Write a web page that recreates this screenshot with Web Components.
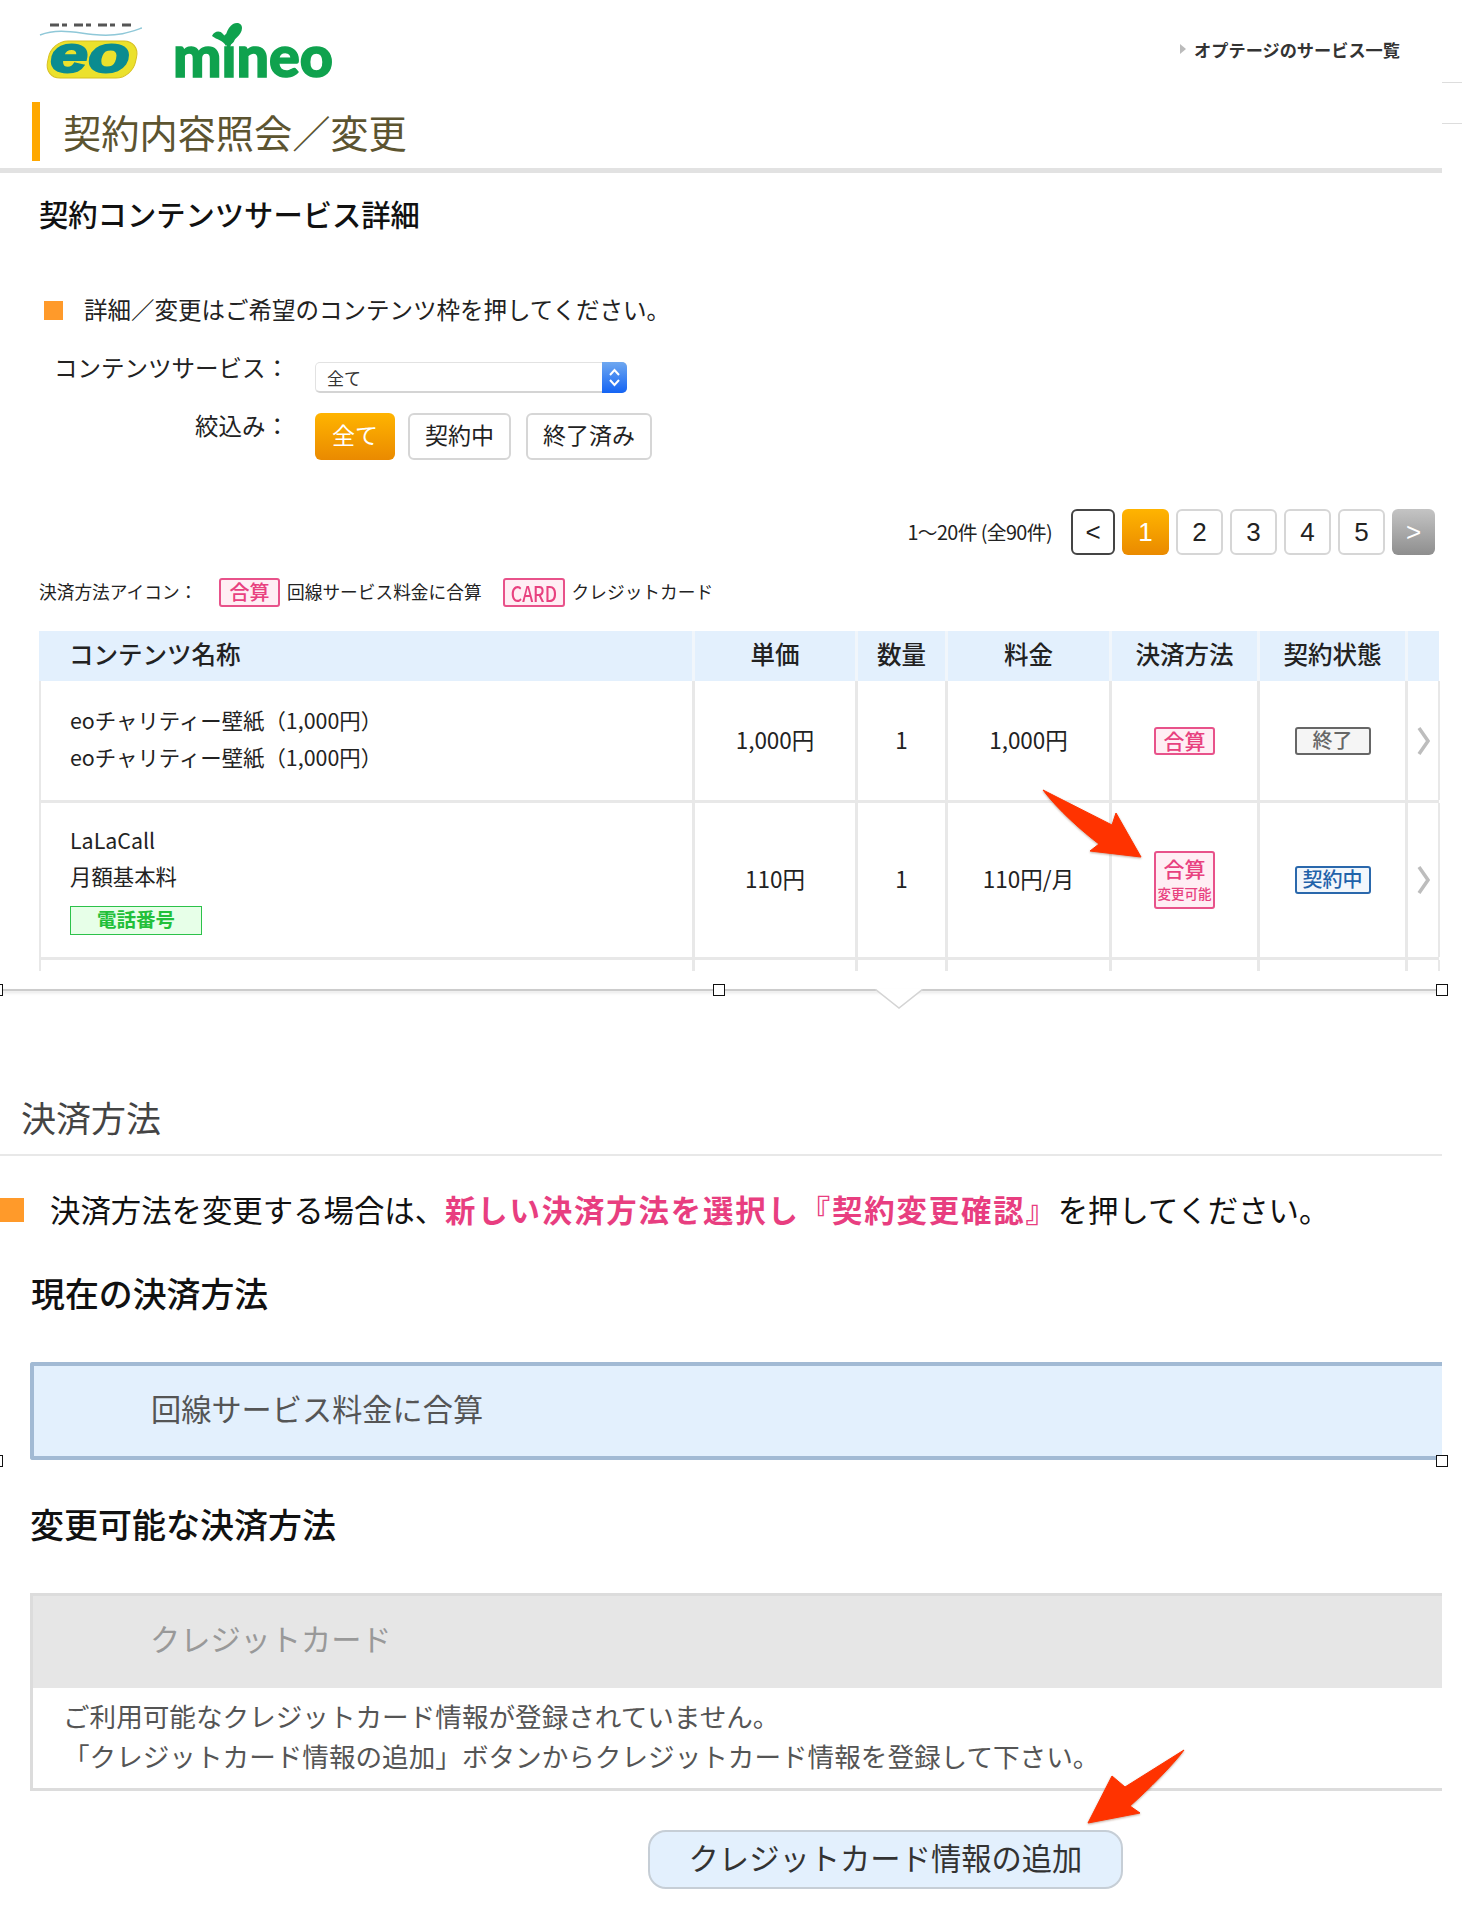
<!DOCTYPE html>
<html lang="ja">
<head>
<meta charset="utf-8">
<title>契約内容照会／変更</title>
<style>
  html, body {
    margin: 0;
    background: #fff;
    color: #222;
    font-family: "Noto Sans CJK JP", "Noto Sans", sans-serif;
    text-spacing-trim: space-all;
  }
</style>
</head>
<body>
<template id="tpl-site-header">
  <style>
    :host { display: flex; justify-content: space-between; height: 102px; width: 1442px; }
    .logos { display: flex; padding: 12px 0 0 30px; height: 90px; gap: 31px; }
    svg { display: block; }
    a { display: flex; align-items: center; gap: 8px; height: 30px; margin: 34px 42px 0 0; font-size: 17.2px; font-weight: 700; color: #333; }
    a::before { content: ''; border-left: 6px solid #bbb; border-top: 5px solid transparent; border-bottom: 5px solid transparent; }
  </style>
  <div class="logos">
    <svg width="112" height="90" viewBox="0 -10 112 90">
      <path d="M20 3 H103" stroke="#555" stroke-width="3" stroke-dasharray="9 3 5 7"/>
      <path d="M10 13 C30 5 50 12 70 13 S100 10 112 6" stroke="#8fc8d8" stroke-width="1.5" fill="none"/>
      <rect x="14" y="19" width="88" height="37" rx="16" fill="#ebe12c" stroke="#d8c020" stroke-width="1" transform="skewX(-12) translate(12 0)"/>
      <text x="20" y="50" textLength="80" lengthAdjust="spacingAndGlyphs" font-family="Liberation Sans" font-weight="700" font-style="italic" font-size="52" fill="#0b8c90" stroke="#0b8c90" stroke-width="2">eo</text>
    </svg>
    <svg width="165" height="90" viewBox="0 -10 165 90">
      <text x="0" y="55" textLength="160" lengthAdjust="spacingAndGlyphs" font-family="Lato" font-weight="900" font-size="58" fill="#0fa24e" stroke="#0fa24e" stroke-width="1.5">mineo</text>
      <path d="M54 25 C50 16 54 6 60 2 C64 0 69 1 69 6 C69 14 60 16 57 25 Z M53 24 C50 18 44 18 39 14 C41 9 47 8 50 12 C53 15 54 20 53 24 Z" fill="#0fa24e"/>
    </svg>
  </div>
  <a>オプテージのサービス一覧</a>
</template>

<template id="tpl-page-title">
  <style>
    :host { display: block; width: 1442px; }
    h1 { margin: 0 0 0 32px; height: 59px; border-left: 8px solid #ffa800; padding-left: 23px; font-size: 38.2px; font-weight: 400; line-height: 60px; color: #5c5430; white-space: nowrap; }
    hr { margin: 7px 0 0; border: 0; height: 5px; background: #e2e2e2; }
  </style>
  <h1><slot></slot></h1>
  <hr>
</template>

<template id="tpl-sub-heading">
  <style>
    :host { display: block; font-weight: 500; white-space: nowrap; color: #111; }
  </style>
  <slot></slot>
</template>

<template id="tpl-square-note">
  <style>
    :host { display: flex; align-items: center; white-space: nowrap; }
    i { flex: none; background: #ff9a2a; width: var(--sq, 19px); height: var(--sq, 19px); margin-right: var(--sq-gap, 21px); }
    span { padding-bottom: 2px; }
  </style>
  <i></i><span><slot></slot></span>
</template>

<template id="tpl-filter-form">
  <style>
    :host { display: grid; grid-template-columns: 289px 1fr; column-gap: 26px; row-gap: 20px; margin-top: 30px; font-size: 23.5px; color: #222; --pill-pad: 6px; }
    label { text-align: right; line-height: 24px; white-space: nowrap; }
    .select { display: flex; width: 310px; height: 28px; margin-top: 7px; border: 1px solid #e2e2e2; border-bottom: 2px solid #d4d4d4; border-radius: 5px; font-size: 17px; line-height: 29px; color: #333; }
    .select span { flex: 1; padding-left: 11px; }
    .select b { width: 25px; margin: -1px -1px -2px 0; border-radius: 0 5px 5px 0; background: linear-gradient(#6fa8f0, #1464f4); display: flex; align-items: center; justify-content: center; }
    .btns { display: flex; gap: 13px; }
    .btns .gap { margin-left: 2px; }
  </style>
  <label>コンテンツサービス：</label>
  <div class="select"><span>全て</span><b>
    <svg width="13" height="21" viewBox="0 0 13 21" fill="none" stroke="#fff" stroke-width="2"><path d="M2 8 L6.5 3 L11 8 M2 13 L6.5 18 L11 13"/></svg>
  </b></div>
  <label>絞込み：</label>
  <div class="btns">
    <pill-button active style="width:80px">全て</pill-button>
    <pill-button style="width:103px">契約中</pill-button>
    <pill-button class="gap" style="width:126px">終了済み</pill-button>
  </div>
</template>

<template id="tpl-pill-button">
  <style>
    :host { display: flex; box-sizing: border-box; height: 47px; padding-bottom: var(--pill-pad, 0); align-items: center; justify-content: center; border: 2px solid #d6d6d6; border-radius: 6px; background: #fff; color: #222; font-size: 23px; }
    :host([active]) { border: 0; background: linear-gradient(#ffb400, #ea8a00); color: #fff; }
    :host([dark]) { border-color: #444; }
    :host([muted]) { border: 0; background: linear-gradient(#c4c4c4, #8e8e8e); color: #fff; }
  </style>
  <slot></slot>
</template>

<template id="tpl-result-pager">
  <style>
    :host { display: flex; justify-content: flex-end; align-items: center; height: 46px; margin-top: 49px; padding-right: 7px; width: 1435px; gap: 7px; }
    span { font-size: 19.8px; margin-right: 12px; padding-bottom: 2px; white-space: nowrap; letter-spacing: -.6px; }
    pill-button { width: 47px; height: 46px; font-size: 26px; font-family: "Liberation Sans", sans-serif; }
  </style>
  <span>1〜20件 (全90件)</span>
  <pill-button dark style="width:44px">&lt;</pill-button>
  <pill-button active>1</pill-button>
  <pill-button>2</pill-button>
  <pill-button>3</pill-button>
  <pill-button>4</pill-button>
  <pill-button>5</pill-button>
  <pill-button muted style="width:43px">&gt;</pill-button>
</template>

<template id="tpl-pay-legend">
  <style>
    :host { display: flex; align-items: center; height: 29px; margin-top: 23px; padding-left: 39px; font-size: 17.7px; white-space: nowrap; }
    .lead { width: 180px; padding-bottom: 3px; }
    .txt { margin-left: 7px; padding-bottom: 3px; }
    state-badge { height: 29px; font-size: 20px; }
    .second { margin-left: 21px; font-size: 22px; width: 62px; }
    .card { display: inline-block; transform: scaleX(.8); }
  </style>
  <span class="lead">決済方法アイコン：</span>
  <state-badge kind="pink">合算</state-badge>
  <span class="txt">回線サービス料金に合算</span>
  <state-badge class="second" kind="pink"><span class="card">CARD</span></state-badge>
  <span class="txt">クレジットカード</span>
</template>

<template id="tpl-state-badge">
  <style>
    :host { display: flex; flex-direction: column; box-sizing: border-box; align-items: center; justify-content: center; width: 61px; height: 28px; padding-bottom: 2px; border: 2px solid; border-radius: 3px; font-size: 21px; font-weight: 500; line-height: 22px; white-space: nowrap; }
    :host([kind=pink]) { border-color: #e8528a; background: #ffeef4; color: #e8417f; }
    :host([kind=gray]) { border-color: #666; background: #f5f5f5; color: #666; width: 76px; font-size: 20px; }
    :host([kind=blue]) { border-color: #2a68ac; background: #f2f7fc; color: #1f62aa; width: 76px; font-size: 20px; }
    :host([kind=green]) { border-color: #2cc24a; background: #e7ffe8; color: #22c03a; width: 132px; height: 29px; border-width: 1px; border-radius: 0; font-size: 19.5px; font-weight: 700; }
    :host([tall]) { height: 58px; padding-bottom: 4px; line-height: 31px; }
    ::slotted(small) { font-size: 13.5px; line-height: 19px; }
  </style>
  <slot></slot>
</template>

<template id="tpl-contract-table">
  <style>
    :host { display: block; width: 1400px; margin: 24px 0 0 39px; --cols: 656px 163px 90px 164px 148px 148px 31px; }
    .head { display: grid; grid-template-columns: var(--cols); height: 50px; background: #e3f0fd; font-size: 24.5px; font-weight: 500; color: #222; }
    .head div { display: flex; align-items: center; justify-content: center; padding-bottom: 6px; border-right: 3px solid #f1f6fb; }
    .head div:first-child { justify-content: flex-start; padding-left: 30px; }
    .head div:last-child { border-right: 0; width: 30px; }
  </style>
  <div class="head">
    <div>コンテンツ名称</div><div>単価</div><div>数量</div><div>料金</div><div>決済方法</div><div>契約状態</div><div></div>
  </div>
  <slot></slot>
</template>

<template id="tpl-contract-row">
  <style>
    :host { display: grid; grid-template-columns: var(--cols); box-sizing: border-box; height: 122px; border-bottom: 3px solid #e8e8e8; font-size: 21.4px; color: #222; }
    :host([tall]) { height: 157px; }
    :host([stub]) { height: 11px; border-bottom: 0; }
    div { display: flex; align-items: center; justify-content: center; border-right: 3px solid #e8e8e8; }
    .name { flex-direction: column; align-items: flex-start; padding: 0 0 4px 29px; border-left: 2px solid #e8e8e8; line-height: 36.5px; white-space: nowrap; }
    .val { padding-bottom: 4px; font-size: 22.5px; }
    .end { border-right-width: 2px; width: 30px; }
    :host([stub]) svg { display: none; }
  </style>
  <div class="name"><slot name="name"></slot></div>
  <div class="val"><slot name="price"></slot></div>
  <div class="val"><slot name="qty"></slot></div>
  <div class="val"><slot name="fee"></slot></div>
  <div><slot name="pay"></slot></div>
  <div><slot name="state"></slot></div>
  <div class="end"><svg width="13" height="28" viewBox="0 0 13 28" fill="none" stroke="#bdbdbd" stroke-width="3.5"><path d="M2 1 L11 14 L2 27"/></svg></div>
</template>

<template id="tpl-selection-bar">
  <style>
    :host { display: block; position: relative; width: 1442px; height: 2px; margin-top: 18px; background: #ccc; box-shadow: 0 2px 3px rgba(0,0,0,.12); }
    i { position: absolute; top: -5px; width: 10px; height: 10px; border: 1px solid #111; background: #fff; }
    svg { position: absolute; left: 875px; top: 0; }
  </style>
  <svg width="48" height="20" viewBox="0 0 48 20"><path d="M0 0 L24 19 L48 0" fill="#fff" stroke="#d4d4d4" stroke-width="1.5"/></svg>
  <i style="left:-9px"></i><i style="left:713px"></i><i style="left:1436px"></i>
</template>

<template id="tpl-method-box">
  <style>
    :host { display: block; position: relative; box-sizing: border-box; width: 1412px; margin-left: 30px; font-size: 30.2px; }
    :host([current]) { height: 98px; border: 4px solid #a2bad4; border-right: 0; border-radius: 3px 0 0 3px; background: #e3f0fd; color: #555; }
    :host([current]) .label { padding: 0 0 0 117px; line-height: 84px; }
    :host([disabled]) { height: 198px; border: 3px solid #dcdcdc; border-right: 0; color: #555; }
    :host([disabled]) .label { padding: 0 0 7px 117px; background: #e6e6e6; color: #999; line-height: 85px; }
    .body { padding: 8px 0 0 30px; font-size: 26.6px; line-height: 40px; white-space: nowrap; }
    :host([current]) .body { display: none; }
    i { position: absolute; bottom: -11px; width: 10px; height: 10px; border: 1px solid #111; background: #fff; display: none; }
    :host([current]) i { display: block; }
  </style>
  <div class="label"><slot name="label"></slot></div>
  <div class="body"><slot></slot></div>
  <i style="left:-43px"></i><i style="left:1402px"></i>
</template>

<template id="tpl-add-button">
  <style>
    :host { display: flex; align-items: center; justify-content: center; box-sizing: border-box; width: 475px; height: 59px; margin: 39px 0 21px 648px; padding-bottom: 5px; border: 2px solid #c6ced6; border-radius: 18px; background: #e3f0fd; font-size: 30.3px; color: #333; white-space: nowrap; }
  </style>
  <slot></slot>
</template>

<template id="tpl-red-arrow">
  <style>
    :host { position: absolute; display: block; line-height: 0; }
    svg { display: block; overflow: visible; filter: drop-shadow(0 1px 1px rgba(120,60,30,.45)); }
    path { fill: #ff3300; stroke: #ff3300; stroke-width: 1; stroke-linejoin: round; }
  </style>
  <svg width="1" height="1"><path></path></svg>
</template>

<template id="tpl-contract-page">
  <style>
    :host { display: flex; width: 1462px; position: relative; }
    main { width: 1442px; flex: none; }
    aside { width: 20px; height: 40px; margin-top: 82px; border-top: 1px solid #ddd; border-bottom: 1px solid #ddd; }
  </style>
  <main><slot></slot></main>
  <aside></aside>
</template>

<contract-page>
  <site-header></site-header>
  <page-title>契約内容照会／変更</page-title>

  <sub-heading style="margin-top:21px;padding:0 0 2px 39px;font-size:29.3px;line-height:38px">契約コンテンツサービス詳細</sub-heading>
  <square-note style="margin:61px 0 0 44px;font-size:23.5px;line-height:28px">詳細／変更はご希望のコンテンツ枠を押してください。</square-note>
  <filter-form></filter-form>
  <result-pager></result-pager>
  <pay-legend></pay-legend>

  <contract-table>
    <contract-row>
      <span slot="name">eoチャリティー壁紙（1,000円）</span>
      <span slot="name">eoチャリティー壁紙（1,000円）</span>
      <span slot="price">1,000円</span>
      <span slot="qty">1</span>
      <span slot="fee">1,000円</span>
      <state-badge slot="pay" kind="pink">合算</state-badge>
      <state-badge slot="state" kind="gray">終了</state-badge>
    </contract-row>
    <contract-row tall>
      <span slot="name">LaLaCall</span>
      <span slot="name">月額基本料</span>
      <state-badge slot="name" kind="green" style="margin-top:11px">電話番号</state-badge>
      <span slot="price">110円</span>
      <span slot="qty">1</span>
      <span slot="fee">110円/月</span>
      <state-badge slot="pay" kind="pink" tall>合算<small>変更可能</small></state-badge>
      <state-badge slot="state" kind="blue">契約中</state-badge>
    </contract-row>
    <contract-row stub></contract-row>
  </contract-table>

  <selection-bar></selection-bar>

  <sub-heading style="box-sizing:border-box;height:63px;margin-top:102px;padding-left:21px;border-bottom:2px solid #e8e8e8;font-size:35px;line-height:48px;font-weight:400;color:#444;width:1442px">決済方法</sub-heading>
  <square-note style="--sq:24px;--sq-gap:26px;margin-top:34px;font-size:30.4px;line-height:38px;color:#111">
    決済方法を変更する場合は、<b style="color:#e83e80;font-weight:700;letter-spacing:1.85px">新しい決済方法を選択し『契約変更確認』</b>を押してください。
  </square-note>

  <sub-heading style="margin-top:42px;padding:0 0 4px 31px;font-size:33.9px;line-height:42px">現在の決済方法</sub-heading>
  <method-box current style="margin-top:44px"><span slot="label">回線サービス料金に合算</span></method-box>

  <sub-heading style="margin-top:42px;padding:0 0 2px 30px;font-size:34px;line-height:44px">変更可能な決済方法</sub-heading>
  <method-box disabled style="margin-top:45px">
    <span slot="label">クレジットカード</span>
    ご利用可能なクレジットカード情報が登録されていません。<br>
    「クレジットカード情報の追加」ボタンからクレジットカード情報を登録して下さい。
  </method-box>
  <add-button>クレジットカード情報の追加</add-button>

  <red-arrow style="left:1043px;top:790px" d="M0 0 L69 35 L73 23 L98 67 L47 61 L56 54 C40 42 15 20 0 0 Z"></red-arrow>
  <red-arrow style="left:1088px;top:1750px" d="M96 0 L37 37 L24 26 L0 73 L52 63 L42 56 C60 40 85 15 96 0 Z"></red-arrow>
</contract-page>

<script>
class ShadowBlock extends HTMLElement {
  constructor() {
    super();
    const template = document.getElementById(`tpl-${this.localName}`);
    this.attachShadow({ mode: 'open' }).appendChild(template.content.cloneNode(true));
  }
}

class RedArrow extends ShadowBlock {
  connectedCallback() {
    this.shadowRoot.querySelector('path').setAttribute('d', this.getAttribute('d'));
  }
}

[
  'contract-page', 'site-header', 'page-title', 'sub-heading', 'square-note',
  'filter-form', 'pill-button', 'result-pager', 'pay-legend', 'state-badge',
  'contract-table', 'contract-row', 'selection-bar', 'method-box', 'add-button',
].forEach((tag) => customElements.define(tag, class extends ShadowBlock {}));

customElements.define('red-arrow', RedArrow);
</script>
</body>
</html>
